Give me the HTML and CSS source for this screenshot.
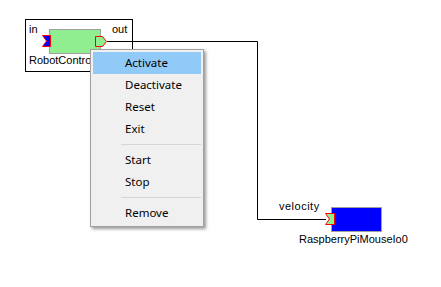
FILE: index.html
```html
<!DOCTYPE html>
<html>
<head>
<meta charset="utf-8">
<link rel="stylesheet" href="styles.css">
</head>
<body>
<div class="canvas">
  <div class="frame"></div>
  <svg class="wires" width="441" height="287" viewBox="0 0 441 287">
    <polyline points="107,41.5 257.5,41.5 257.5,219.5 326,219.5" fill="none" stroke="#000" stroke-width="1"/>
    <rect x="49.5" y="29.5" width="51" height="24" fill="#90ee90" stroke="#a0a0a0"/>
    <polygon points="42.5,35.5 50.5,35.5 50.5,46.5 42.5,46.5 46.5,41" fill="#0000ff" stroke="#ff0000"/>
    <polygon points="95.5,36.5 102.5,36.5 106.5,41.5 102.5,46.5 95.5,46.5" fill="#90ee90" stroke="#ff0000"/>
    <rect x="331.5" y="207.5" width="50" height="24" fill="#0000ff" stroke="#a0a0a0"/>
    <polygon points="325.5,213.5 334.5,213.5 334.5,224.5 325.5,224.5 329.5,219" fill="#90ee90" stroke="#ff0000"/>
  </svg>
  <span class="lbl lbl-in">in</span>
  <span class="lbl lbl-out">out</span>
  <span class="lbl lbl-robot">RobotController0</span>
  <span class="lbl lbl-vel">velocity</span>
  <span class="lbl lbl-rasp">RaspberryPiMouseIo0</span>

  <div class="menu">
    <div class="item active">Activate</div>
    <div class="item">Deactivate</div>
    <div class="item">Reset</div>
    <div class="item">Exit</div>
    <div class="sep"></div>
    <div class="item">Start</div>
    <div class="item">Stop</div>
    <div class="sep"></div>
    <div class="item">Remove</div>
  </div>
</div>
</body>
</html>
```
FILE: styles.css
```css
html, body {
  margin: 0;
  padding: 0;
  background: #fff;
}
body {
  width: 441px;
  height: 287px;
  overflow: hidden;
}
.canvas {
  position: relative;
  width: 441px;
  height: 287px;
  font-family: "Liberation Sans", Arial, sans-serif;
  font-size: 11px;
  color: #000;
}
.frame {
  position: absolute;
  left: 25px;
  top: 19px;
  width: 106px;
  height: 51px;
  border: 1px solid #000;
  background: #fff;
}
.wires {
  position: absolute;
  left: 0;
  top: 0;
}
.lbl {
  position: absolute;
  line-height: 13px;
  white-space: nowrap;
}
.lbl-in { left: 29px; top: 23px; }
.lbl-out { left: 112px; top: 23px; }
.lbl-robot { left: 29px; top: 54px; }
.lbl-vel { left: 279px; top: 200px; letter-spacing: 0.5px; }
.lbl-rasp { left: 299px; top: 233px; }

.menu {
  position: absolute;
  left: 90px;
  top: 49px;
  width: 108px;
  padding: 2px;
  border: 1px solid #a0a0a0;
  background: #f0f0f0;
  box-shadow: 2px 2px 3px rgba(0, 0, 0, 0.4);
  font-family: "Noto Sans", "Open Sans", sans-serif;
  font-size: 11.5px;
  color: #000;
}
.item {
  height: 22px;
  line-height: 22px;
  padding-left: 32px;
  white-space: nowrap;
}
.item.active {
  background: #91c9f7;
}
.sep {
  height: 1px;
  margin: 4px 0 4px 28px;
  background: #d5d5d5;
}
```
